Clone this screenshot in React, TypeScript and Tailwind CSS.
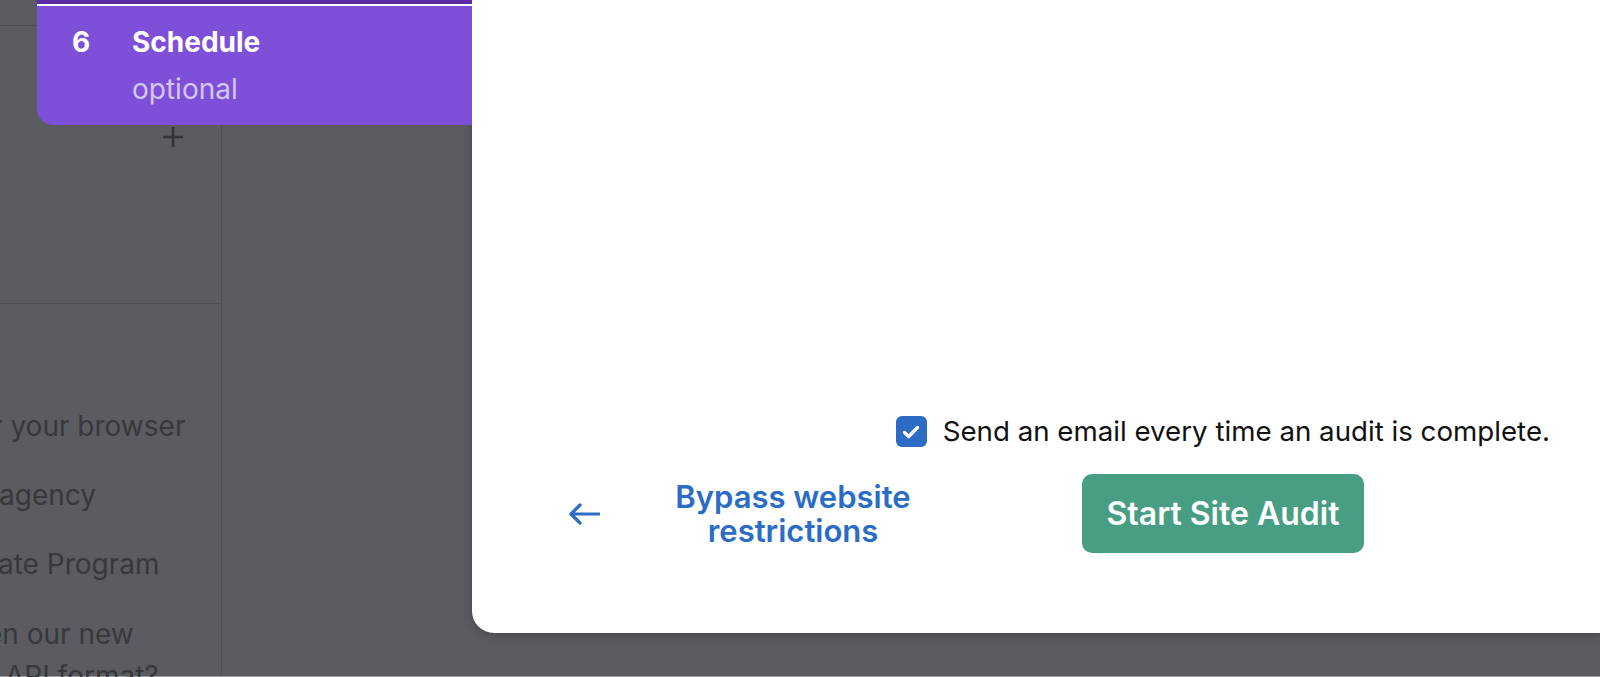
export default function App() {
  return (
    <div className="relative h-[677px] w-[1600px] overflow-hidden bg-[#5b5c61] font-['Inter',sans-serif]">
      <div className="flex h-[676px] items-start">
        {/* Sidebar (dimmed) */}
        <aside className="h-full w-[222px] shrink-0 border-r border-[#4e4f54]">
          <div className="h-[304px] border-b border-[#4e4f54]">
            <div className="h-[26px] border-b border-[#4e4f54]" />
            <div className="mt-[101px] pl-[163px]">
              <svg width="20" height="20" viewBox="0 0 20 20" className="text-[#333438]">
                <path d="M10 1v18M1 10h18" stroke="currentColor" strokeWidth="2.6" strokeLinecap="square" />
              </svg>
            </div>
          </div>
          <ul className="flex flex-col gap-[29px] pt-[102px] text-[28px] leading-[40px] text-[#37383c] whitespace-nowrap">
            <li className="-ml-[8px]">r your browser</li>
            <li className="-ml-[1px]">agency</li>
            <li className="-ml-[2px]">ate Program</li>
            <li className="leading-[42px]">
              <div className="-ml-[14px]">en our new</div>
              <div className="pl-[5px]">API format?</div>
            </li>
          </ul>
        </aside>

        <div className="w-[250px] shrink-0" />

        {/* Modal */}
        <main className="flex h-[633px] flex-1 flex-col justify-end rounded-bl-[22px] bg-white pb-[80px] shadow-[0_2px_10px_rgba(0,0,0,0.25)]">
          <label className="flex items-center justify-end gap-[16px] pr-[50px]">
            <span className="flex h-[31px] w-[31px] shrink-0 items-center justify-center rounded-[6px] bg-[#2d6bc4]">
              <svg width="20" height="16" viewBox="0 0 20 16">
                <path d="M3.5 8.5l4.2 4 8.8-9" fill="none" stroke="white" strokeWidth="3.4" strokeLinecap="round" strokeLinejoin="round" />
              </svg>
            </span>
            <span className="text-[27.7px] leading-[31px] text-[#111]">Send an email every time an audit is complete.</span>
          </label>

          <div className="mt-[27px] flex items-center pl-[97px]">
            <svg width="31" height="22" viewBox="0 0 31 22" className="shrink-0 text-[#2a6cc6]">
              <path d="M11 2L2 11l9 9M2.5 11H30" fill="none" stroke="currentColor" strokeWidth="3.2" strokeLinecap="round" strokeLinejoin="round" />
            </svg>
            <a className="ml-[43px] w-[300px] shrink-0 text-center text-[31px] font-semibold leading-[34px] text-[#2a6cc6]">
              Bypass website
              <br />
              restrictions
            </a>
            <button className="ml-[139px] h-[79px] w-[282px] shrink-0 rounded-[10px] bg-[#489e82] text-[32px] font-semibold text-white">
              Start Site Audit
            </button>
          </div>
        </main>
      </div>
      <div className="h-px bg-[#9c9da1]" />

      {/* Active step card, sits over the sidebar */}
      <div className="absolute left-[37px] top-0 h-[125px] w-[435px] overflow-hidden rounded-bl-[16px] bg-[#7e4fd8]">
        <div className="h-[4px] bg-[#5a2ca6]" />
        <div className="h-[2px] bg-white" />
        <div className="flex pt-[19px]">
          <div className="w-[95px] shrink-0 pl-[35px] text-[28px] font-bold leading-[34px] text-white">6</div>
          <div>
            <div className="text-[28px] font-bold leading-[34px] text-white">Schedule</div>
            <div className="mt-[13px] text-[28px] leading-[34px] text-[#d6c6f4]">optional</div>
          </div>
        </div>
      </div>
    </div>
  );
}
